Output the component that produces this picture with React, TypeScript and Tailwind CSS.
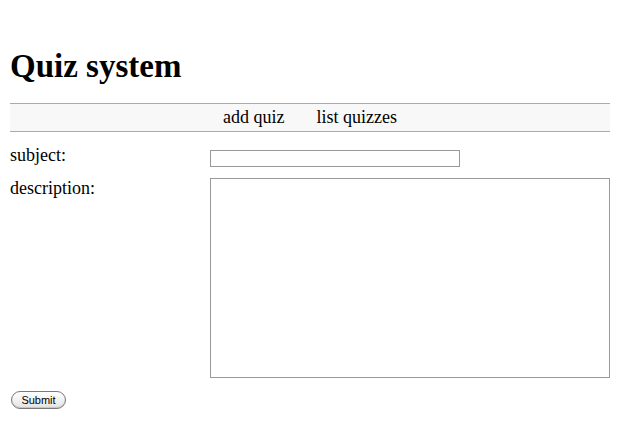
import React from "react";

export default function App() {
	return (
		<div className="min-h-[437px] bg-white px-[10px] font-['Palatino','Liberation_Serif',serif] text-black">
			<h1 className="pt-[46px] text-[33px] font-bold leading-[40px]">
				Quiz system
			</h1>

			<nav className="mt-[17px] flex h-[29px] items-center justify-center gap-[32px] border-y border-[#aaaaaa] bg-[#f8f8f8] text-[18px]">
				<a href="#">add quiz</a>
				<a href="#">list quizzes</a>
			</nav>

			<form className="mt-[13px] flex flex-col" onSubmit={(e) => e.preventDefault()}>
				<div className="flex h-[33px] items-start">
					<label className="w-[200px] text-[18px] leading-[20px]">subject:</label>
					<input
						type="text"
						className="mt-[5px] h-[17px] w-[250px] border border-[#999999] bg-white"
					/>
				</div>
				<div className="flex items-start">
					<label className="w-[200px] text-[18px] leading-[20px]">description:</label>
					<textarea className="h-[200px] w-[400px] resize-none border border-[#999999] bg-white" />
				</div>
				<div className="mt-[13px] flex">
					<button
						type="submit"
						className="ml-[1px] h-[18px] w-[55px] rounded-full border border-[#7a7a7a] bg-gradient-to-b from-white to-[#e4e4e4] font-['Liberation_Sans',sans-serif] text-[11px] font-medium leading-[16px] shadow-[inset_0_-1px_1px_rgba(0,0,0,0.15)]"
					>
						Submit
					</button>
				</div>
			</form>
		</div>
	);
}
